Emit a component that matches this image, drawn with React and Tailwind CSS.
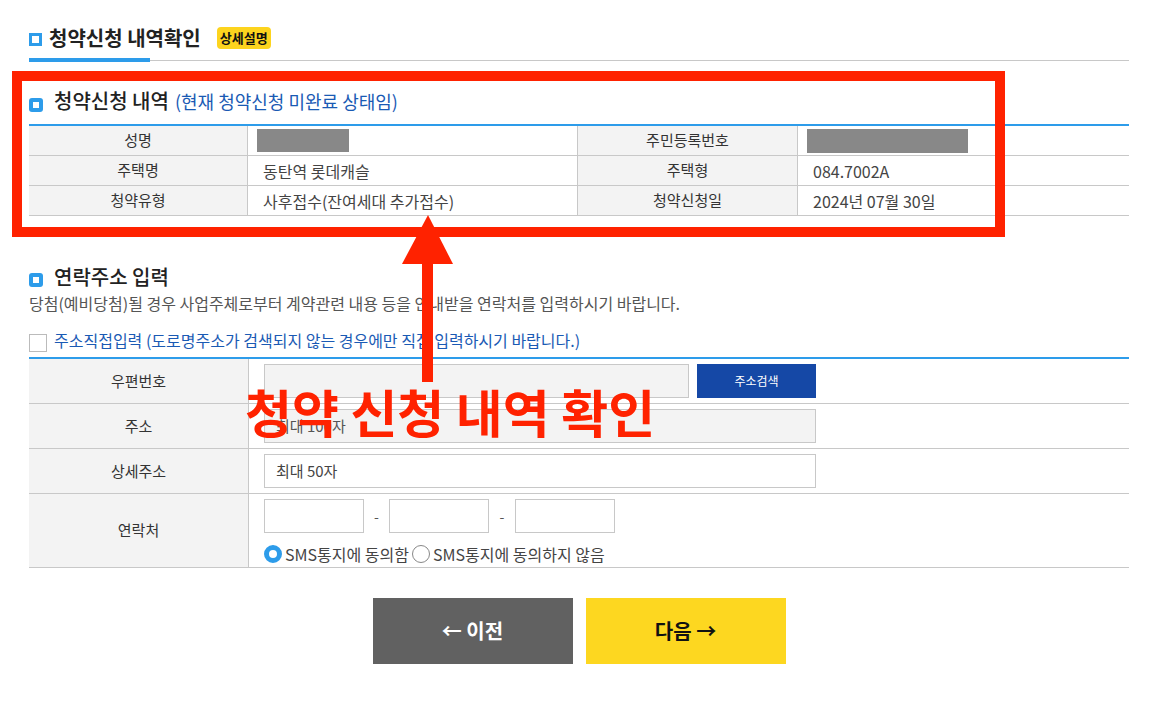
import React from "react";

const font = { fontFamily: '"Noto Sans CJK KR", "Noto Sans", sans-serif' };

function SectionIcon() {
  return (
    <div className="w-[14px] h-[14px] rounded-[3px] bg-[#2d9cea] flex items-center justify-center shrink-0">
      <div className="w-[6px] h-[6px] bg-white" />
    </div>
  );
}

function InfoRow({ l1, v1, l2, v2 }) {
  return (
    <div className="grid grid-cols-[219px_330px_220px_331px] h-[30px] border-b border-[#c8c8c8]">
      <div className="bg-[#f3f3f3] border-r border-[#c8c8c8] flex items-center justify-center text-[15px] text-[#333]">{l1}</div>
      <div className="border-r border-[#c8c8c8] flex items-center pl-[15px] text-[16px] text-[#444]">{v1}</div>
      <div className="bg-[#f3f3f3] border-r border-[#c8c8c8] flex items-center justify-center text-[15px] text-[#333]">{l2}</div>
      <div className="flex items-center pl-[15px] text-[16px] text-[#444]">{v2}</div>
    </div>
  );
}

function FormRow({ label, h, children }) {
  return (
    <div className={`grid grid-cols-[220px_880px] border-b border-[#c8c8c8] ${h}`}>
      <div className="bg-[#f3f3f3] border-r border-[#c8c8c8] flex items-center justify-center text-[15px] text-[#333]">{label}</div>
      <div className="pl-[15px] flex items-center">{children}</div>
    </div>
  );
}

export default function App() {
  return (
    <div className="relative w-[1161px] h-[723px] bg-white overflow-hidden" style={font}>
      <div className="pl-[29px] w-[1129px]">
        {/* page title */}
        <div className="mt-[26px] h-[24px] flex items-center">
          <div className="w-[13px] h-[13px] border-[3px] border-[#2d9cea] mt-[2px]" />
          <h1 className="ml-[7px] text-[20px] font-bold text-[#222]">청약신청 내역확인</h1>
          <span className="ml-[16px] h-[22px] px-[3px] rounded-[4px] bg-[#fdd41e] text-[13px] font-bold text-[#111] flex items-center">상세설명</span>
        </div>
        <div className="mt-[8px] h-[4px] flex items-center">
          <div className="w-[121px] h-[4px] bg-[#2d9cea]" />
          <div className="flex-1 h-px bg-[#c8c8c8]" />
        </div>

        {/* 청약신청 내역 */}
        <div className="mt-[27px] h-[24px] flex items-center">
          <div className="mt-[8px]"><SectionIcon /></div>
          <span className="ml-[11px] text-[20px] font-medium text-[#222]">청약신청 내역</span>
          <span className="ml-[6px] text-[18px] text-[#1a5ab4]">(현재 청약신청 미완료 상태임)</span>
        </div>
        <div className="mt-[11px] border-t-2 border-[#2d9cea]">
          <InfoRow
            l1="성명"
            v1={<div className="w-[92px] h-[23px] bg-[#888] -ml-[6px]" />}
            l2="주민등록번호"
            v2={<div className="w-[161px] h-[24px] bg-[#888] -ml-[6px]" />}
          />
          <InfoRow l1="주택명" v1="동탄역 롯데캐슬" l2="주택형" v2="084.7002A" />
          <InfoRow l1="청약유형" v1="사후접수(잔여세대 추가접수)" l2="청약신청일" v2="2024년 07월 30일" />
        </div>

        {/* 연락주소 입력 */}
        <div className="mt-[49px] h-[24px] flex items-center">
          <div className="mt-[6px]"><SectionIcon /></div>
          <span className="ml-[11px] text-[20px] font-medium text-[#222]">연락주소 입력</span>
        </div>
        <p className="mt-[4px] h-[20px] leading-[20px] text-[16px] text-[#555]">
          당첨(예비당첨)될 경우 사업주체로부터 계약관련 내용 등을 안내받을 연락처를 입력하시기 바랍니다.
        </p>
        <div className="mt-[18px] h-[18px] flex items-center">
          <div className="w-[18px] h-[18px] border border-[#bbb] bg-white mt-[6px]" />
          <span className="ml-[7px] text-[16px] text-[#1a5ab4]">주소직접입력 (도로명주소가 검색되지 않는 경우에만 직접 입력하시기 바랍니다.)</span>
        </div>

        <div className="mt-[8px] border-t-2 border-[#2d9cea]">
          <FormRow label="우편번호" h="h-[45px]">
            <div className="w-[425px] h-[34px] bg-[#f3f3f3] border border-[#c8c8c8]" />
            <button className="ml-[8px] w-[119px] h-[34px] bg-[#1548a6] text-white text-[12px]">주소검색</button>
          </FormRow>
          <FormRow label="주소" h="h-[45px]">
            <div className="w-[552px] h-[34px] bg-[#f3f3f3] border border-[#c8c8c8] flex items-center pl-[11px] text-[15px] text-[#555]">최대 100자</div>
          </FormRow>
          <FormRow label="상세주소" h="h-[45px]">
            <div className="w-[552px] h-[34px] bg-white border border-[#c8c8c8] flex items-center pl-[11px] text-[15px] text-[#444]">최대 50자</div>
          </FormRow>
          <FormRow label="연락처" h="h-[74px]">
            <div className="self-start pt-[5px] flex flex-col">
              <div className="flex items-center">
                <div className="w-[100px] h-[34px] border border-[#c8c8c8]" />
                <span className="w-[25px] text-center text-[14px] text-[#555]">-</span>
                <div className="w-[100px] h-[34px] border border-[#c8c8c8]" />
                <span className="w-[26px] text-center text-[14px] text-[#555]">-</span>
                <div className="w-[100px] h-[34px] border border-[#c8c8c8]" />
              </div>
              <div className="mt-[11px] h-[20px] flex items-center text-[16px] text-[#444]">
                <div className="w-[18px] h-[18px] rounded-full border-[5px] border-[#2d9cea] bg-white" />
                <span className="ml-[3px]">SMS통지에 동의함</span>
                <div className="ml-[3px] w-[18px] h-[18px] rounded-full border border-[#888] bg-white" />
                <span className="ml-[3px]">SMS통지에 동의하지 않음</span>
              </div>
            </div>
          </FormRow>
        </div>

        <div className="mt-[30px] flex justify-center gap-[13px]">
          <button className="w-[200px] h-[66px] bg-[#616161] text-white text-[20px] font-bold">← 이전</button>
          <button className="w-[200px] h-[66px] bg-[#fdd720] text-[#111] text-[20px] font-bold">다음 →</button>
        </div>
      </div>

      {/* annotation overlay */}
      <div className="absolute left-[12px] top-[71px] w-[993px] h-[166px] border-[10px] border-[#ff2200]" />
      <svg className="absolute left-[400px] top-[213px]" width="56" height="172" viewBox="0 0 56 172">
        <polygon points="28,2 53,51 2,51" fill="#ff2200" />
        <rect x="22" y="45" width="11" height="124" fill="#ff2200" />
      </svg>
      <div className="absolute left-[245px] top-[386px] text-[51px] font-bold leading-none text-[#ff2200] whitespace-nowrap">
        청약 신청 내역 확인
      </div>
    </div>
  );
}
